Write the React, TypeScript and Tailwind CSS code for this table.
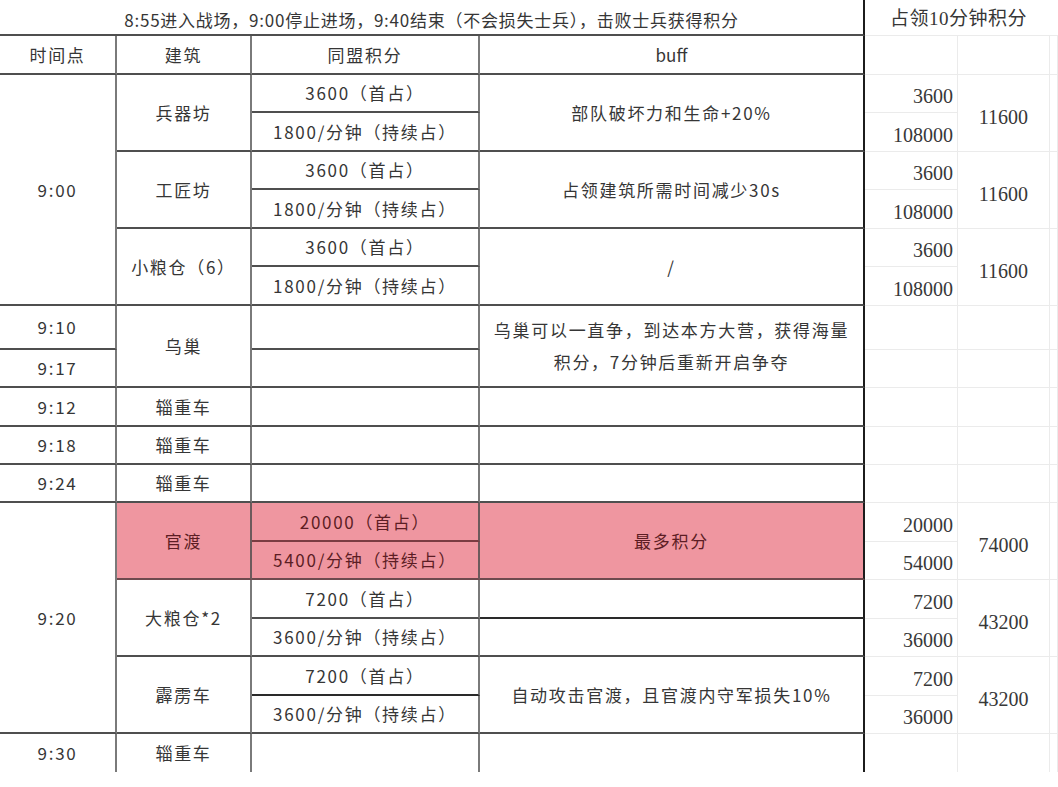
import React from "react";

const base = "flex items-center justify-center text-center text-[17px]";
const trk = "tracking-[1.7px]";
const txt = "text-[#363636]";
const ptxt = "text-[#5c1d24] bg-[#ef96a0]";
const bB = "border-b-2 border-b-[#4f4f4f]";
const bBk = "border-b-2 border-b-[#2a2a2a]";
const bBp = "border-b-2 border-b-[#7a3c42]";
const bBpg = "border-b-2 border-b-[#6e4a4e]";
const bR = "border-r-2 border-r-[#7a7a7a]";
const bRp = "border-r-2 border-r-[#6d5a5c]";
const bRD = "border-r-2 border-r-[#1c1c1c]";

const L = `${base} ${trk} ${txt} ${bB} ${bR}`;
const LB = `${base} ${trk} ${txt} ${bB} ${bRD}`;
const LN = `${base} ${trk} ${txt} ${bR}`;
const LBN = `${base} ${trk} ${txt} ${bRD}`;

const R =
  "flex items-center justify-end pr-[4px] pt-[5px] border-b border-r border-[#ebebeb] text-[#383838] text-[20px]";
const RC =
  "flex items-center justify-center pt-[7px] border-b border-r border-[#ebebeb] text-[#383838] text-[20px]";
const RE = "border-b border-r border-[#ebebeb]";
const REN = "border-r border-[#ebebeb]";

const serif = { fontFamily: '"Liberation Serif", "Noto Sans CJK SC", serif' };

export default function App() {
  return (
    <div
      className="w-[1058px] h-[787px] bg-white overflow-hidden"
      style={{ fontFamily: '"Noto Sans CJK SC", "Noto Sans", sans-serif' }}
    >
      <div className="grid grid-cols-[117px_135px_228px_385px_93px_92px_8px] grid-rows-[36px_39px_38px_39px_38px_39px_38px_39px_44px_38px_39px_38px_38px_39px_38px_39px_38px_39px_38px_38px]">
        {/* Row 1: title */}
        <div className={`${base} ${txt} ${bB} ${bRD} tracking-[0.75px] col-start-1 col-span-4 row-start-1 pt-[6px]`}>
          8:55进入战场，9:00停止进场，9:40结束（不会损失士兵），击败士兵获得积分
        </div>
        <div
          className="col-start-5 col-span-3 row-start-1 flex items-center justify-center pt-[4px] pr-[6px] border-b border-[#ebebeb] text-[#363636] text-[19px] tracking-[0.5px]"
          style={serif}
        >
          占领10分钟积分
        </div>

        {/* Row 2: header */}
        <div className={`${L} col-start-1 row-start-2`}>时间点</div>
        <div className={`${L} col-start-2 row-start-2`}>建筑</div>
        <div className={`${L} col-start-3 row-start-2`}>同盟积分</div>
        <div className={`${base} ${txt} ${bB} ${bRD} col-start-4 row-start-2`}>buff</div>
        <div className={`${RE} col-start-5 row-start-2`} />
        <div className={`${RE} col-start-6 row-start-2`} />
        <div className={`${RE} col-start-7 row-start-2`} />

        {/* 9:00 block */}
        <div className={`${L} col-start-1 row-start-3 row-span-6`}>9:00</div>

        <div className={`${L} col-start-2 row-start-3 row-span-2`}>兵器坊</div>
        <div className={`${L} col-start-3 row-start-3`}>3600（首占）</div>
        <div className={`${L} col-start-3 row-start-4`}>1800/分钟（持续占）</div>
        <div className={`${LB} col-start-4 row-start-3 row-span-2`}>部队破坏力和生命+20%</div>
        <div className={`${R} col-start-5 row-start-3`} style={serif}>3600</div>
        <div className={`${R} col-start-5 row-start-4`} style={serif}>108000</div>
        <div className={`${RC} col-start-6 row-start-3 row-span-2`} style={serif}>11600</div>
        <div className={`${RE} col-start-7 row-start-3 row-span-2`} />

        <div className={`${L} col-start-2 row-start-5 row-span-2`}>工匠坊</div>
        <div className={`${L} col-start-3 row-start-5`}>3600（首占）</div>
        <div className={`${L} col-start-3 row-start-6`}>1800/分钟（持续占）</div>
        <div className={`${LB} col-start-4 row-start-5 row-span-2`}>占领建筑所需时间减少30s</div>
        <div className={`${R} col-start-5 row-start-5`} style={serif}>3600</div>
        <div className={`${R} col-start-5 row-start-6`} style={serif}>108000</div>
        <div className={`${RC} col-start-6 row-start-5 row-span-2`} style={serif}>11600</div>
        <div className={`${RE} col-start-7 row-start-5 row-span-2`} />

        <div className={`${L} col-start-2 row-start-7 row-span-2`}>小粮仓（6）</div>
        <div className={`${L} col-start-3 row-start-7`}>3600（首占）</div>
        <div className={`${L} col-start-3 row-start-8`}>1800/分钟（持续占）</div>
        <div className={`${LB} col-start-4 row-start-7 row-span-2`}>/</div>
        <div className={`${R} col-start-5 row-start-7`} style={serif}>3600</div>
        <div className={`${R} col-start-5 row-start-8`} style={serif}>108000</div>
        <div className={`${RC} col-start-6 row-start-7 row-span-2`} style={serif}>11600</div>
        <div className={`${RE} col-start-7 row-start-7 row-span-2`} />

        {/* 乌巢 */}
        <div className={`${L} col-start-1 row-start-9`}>9:10</div>
        <div className={`${L} col-start-1 row-start-10`}>9:17</div>
        <div className={`${L} col-start-2 row-start-9 row-span-2`}>乌巢</div>
        <div className={`${L} col-start-3 row-start-9`} />
        <div className={`${L} col-start-3 row-start-10`} />
        <div className={`${LB} col-start-4 row-start-9 row-span-2 leading-[32px] px-[8px]`}>
          乌巢可以一直争，到达本方大营，获得海量
          <br />
          积分，7分钟后重新开启争夺
        </div>
        <div className={`${RE} col-start-5 row-start-9`} />
        <div className={`${RE} col-start-6 row-start-9`} />
        <div className={`${RE} col-start-7 row-start-9`} />
        <div className={`${RE} col-start-5 row-start-10`} />
        <div className={`${RE} col-start-6 row-start-10`} />
        <div className={`${RE} col-start-7 row-start-10`} />

        {/* 辎重车 rows */}
        <div className={`${L} col-start-1 row-start-11`}>9:12</div>
        <div className={`${L} col-start-2 row-start-11`}>辎重车</div>
        <div className={`${L} col-start-3 row-start-11`} />
        <div className={`${LB} col-start-4 row-start-11`} />
        <div className={`${RE} col-start-5 row-start-11`} />
        <div className={`${RE} col-start-6 row-start-11`} />
        <div className={`${RE} col-start-7 row-start-11`} />

        <div className={`${L} col-start-1 row-start-12`}>9:18</div>
        <div className={`${L} col-start-2 row-start-12`}>辎重车</div>
        <div className={`${L} col-start-3 row-start-12`} />
        <div className={`${LB} col-start-4 row-start-12`} />
        <div className={`${RE} col-start-5 row-start-12`} />
        <div className={`${RE} col-start-6 row-start-12`} />
        <div className={`${RE} col-start-7 row-start-12`} />

        <div className={`${L} col-start-1 row-start-13`}>9:24</div>
        <div className={`${L} col-start-2 row-start-13`}>辎重车</div>
        <div className={`${L} col-start-3 row-start-13`} />
        <div className={`${LB} col-start-4 row-start-13`} />
        <div className={`${RE} col-start-5 row-start-13`} />
        <div className={`${RE} col-start-6 row-start-13`} />
        <div className={`${RE} col-start-7 row-start-13`} />

        {/* 9:20 block */}
        <div className={`${L} col-start-1 row-start-14 row-span-6`}>9:20</div>

        <div className={`${base} ${trk} ${ptxt} ${bBpg} ${bRp} col-start-2 row-start-14 row-span-2`}>官渡</div>
        <div className={`${base} ${trk} ${ptxt} ${bBp} ${bRp} col-start-3 row-start-14`}>20000（首占）</div>
        <div className={`${base} ${trk} ${ptxt} ${bBpg} ${bRp} col-start-3 row-start-15`}>5400/分钟（持续占）</div>
        <div className={`${base} ${trk} ${ptxt} ${bBpg} ${bRD} col-start-4 row-start-14 row-span-2`}>最多积分</div>
        <div className={`${R} col-start-5 row-start-14`} style={serif}>20000</div>
        <div className={`${R} col-start-5 row-start-15`} style={serif}>54000</div>
        <div className={`${RC} col-start-6 row-start-14 row-span-2`} style={serif}>74000</div>
        <div className={`${RE} col-start-7 row-start-14 row-span-2`} />

        <div className={`${L} col-start-2 row-start-16 row-span-2`}>大粮仓*2</div>
        <div className={`${L} col-start-3 row-start-16`}>7200（首占）</div>
        <div className={`${L} col-start-3 row-start-17`}>3600/分钟（持续占）</div>
        <div className={`${base} ${txt} ${bBk} ${bRD} col-start-4 row-start-16`} />
        <div className={`${LB} col-start-4 row-start-17`} />
        <div className={`${R} col-start-5 row-start-16`} style={serif}>7200</div>
        <div className={`${R} col-start-5 row-start-17`} style={serif}>36000</div>
        <div className={`${RC} col-start-6 row-start-16 row-span-2`} style={serif}>43200</div>
        <div className={`${RE} col-start-7 row-start-16 row-span-2`} />

        <div className={`${L} col-start-2 row-start-18 row-span-2`}>霹雳车</div>
        <div className={`${base} ${trk} ${txt} ${bBk} ${bR} col-start-3 row-start-18`}>7200（首占）</div>
        <div className={`${L} col-start-3 row-start-19`}>3600/分钟（持续占）</div>
        <div className={`${LB} col-start-4 row-start-18 row-span-2`}>自动攻击官渡，且官渡内守军损失10%</div>
        <div className={`${R} col-start-5 row-start-18`} style={serif}>7200</div>
        <div className={`${R} col-start-5 row-start-19`} style={serif}>36000</div>
        <div className={`${RC} col-start-6 row-start-18 row-span-2`} style={serif}>43200</div>
        <div className={`${RE} col-start-7 row-start-18 row-span-2`} />

        {/* 9:30 */}
        <div className={`${LN} col-start-1 row-start-20`}>9:30</div>
        <div className={`${LN} col-start-2 row-start-20`}>辎重车</div>
        <div className={`${LN} col-start-3 row-start-20`} />
        <div className={`${LBN} col-start-4 row-start-20`} />
        <div className={`${REN} col-start-5 row-start-20`} />
        <div className={`${REN} col-start-6 row-start-20`} />
        <div className={`${REN} col-start-7 row-start-20`} />
      </div>
    </div>
  );
}
